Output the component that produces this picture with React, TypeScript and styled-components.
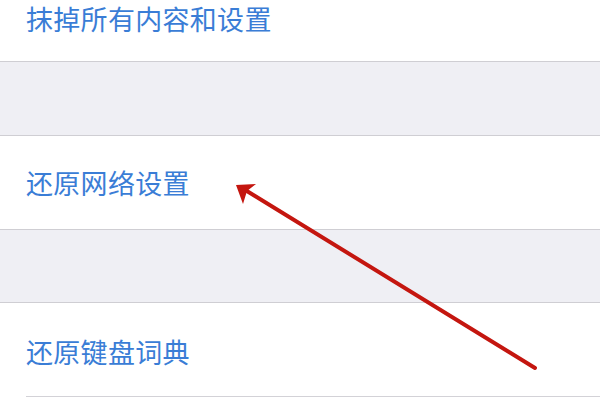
import React from 'react'
import styled, { createGlobalStyle } from 'styled-components'

const GlobalStyle = createGlobalStyle`
  html, body {
    margin: 0;
    padding: 0;
    background: #ffffff;
  }
  body {
    font-family: "Noto Sans CJK SC", "Noto Sans", sans-serif;
  }
`

interface CellProps {
  $height: number
  $padTop?: number
  $padBottom?: number
  $inset?: boolean
}

const Page = styled.div`
  position: relative;
  width: 600px;
  height: 418px;
  overflow: hidden;
  background: #ffffff;
`

const Cell = styled.div<CellProps>`
  position: relative;
  display: flex;
  align-items: center;
  box-sizing: border-box;
  height: ${(p) => p.$height}px;
  padding-left: 26px;
  padding-top: ${(p) => p.$padTop || 0}px;
  padding-bottom: ${(p) => p.$padBottom || 0}px;
  background: #ffffff;
  border-bottom: ${(p) => (p.$inset ? 'none' : '1px solid #cfced3')};
  ${(p) =>
    p.$inset &&
    `
    &::after {
      content: '';
      position: absolute;
      left: 26px;
      right: 0;
      bottom: -1px;
      height: 1px;
      background: #d3d2d7;
    }
  `}
`

const CellLabel = styled.span`
  color: #3a7dd6;
  font-size: 27px;
  line-height: 1;
  letter-spacing: 0.3px;
  white-space: nowrap;
`

const Spacer = styled.div<{ $height: number }>`
  box-sizing: border-box;
  height: ${(p) => p.$height}px;
  background: #efeff4;
  border-bottom: 1px solid #cfced3;
`

const Overlay = styled.svg`
  position: absolute;
  left: 0;
  top: 0;
  pointer-events: none;
`

const Arrow: React.FC = () => (
  <Overlay width="600" height="418" viewBox="0 0 600 418">
    <line
      x1="535"
      y1="368"
      x2="242"
      y2="188"
      stroke="#c4160f"
      strokeWidth="4"
      strokeLinecap="round"
    />
    <polygon points="236,185 256,184 247,191 243,204" fill="#c4160f" />
  </Overlay>
)

const App: React.FC = () => (
  <>
    <GlobalStyle />
    <Page>
      <Cell $height={62} $padBottom={24}>
        <CellLabel>抹掉所有内容和设置</CellLabel>
      </Cell>
      <Spacer $height={74} />
      <Cell $height={94}>
        <CellLabel>还原网络设置</CellLabel>
      </Cell>
      <Spacer $height={73} />
      <Cell $height={93} $padTop={4} $inset>
        <CellLabel>还原键盘词典</CellLabel>
      </Cell>
      <Arrow />
    </Page>
  </>
)

export default App
